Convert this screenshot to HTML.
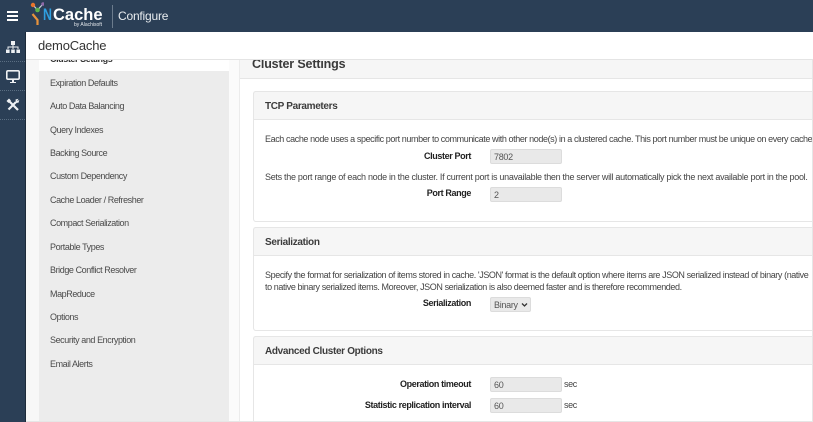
<!DOCTYPE html>
<html><head><meta charset="utf-8"><style>
html,body{margin:0;padding:0;width:813px;height:422px;overflow:hidden;background:#fff;font-family:"Liberation Sans",sans-serif;color:#333}
div,span{position:absolute;white-space:nowrap}
#w{left:0;top:0;width:813px;height:422px;overflow:hidden}
.m{left:50px;font-size:9px;color:#4a4a4a;line-height:12px;letter-spacing:-.42px}
.h{left:253px;width:560px;background:#f6f6f6;border:1px solid #e6e6e6;border-right:0;box-sizing:border-box;border-radius:3px 0 0 0}
.c{left:253px;width:560px;background:#fff;border:1px solid #e6e6e6;border-right:0;box-sizing:border-box;border-radius:3px 0 0 3px}
.t{left:265px;font-size:10px;font-weight:bold;color:#3c3c3c;line-height:14px;letter-spacing:-.33px}
.p{left:265px;font-size:9px;color:#444;line-height:12px;letter-spacing:-.4px}
.l{right:342px;font-size:9px;font-weight:bold;color:#222;line-height:12px;letter-spacing:-.38px}
.i{left:490px;width:72px;height:15px;background:#e9e9e9;border:1px solid #dcdcdc;box-sizing:border-box;border-radius:2px;font-size:9px;color:#555;line-height:14px;padding-left:3px;letter-spacing:-.3px}
.sb{left:0;width:25px;height:1px;border-bottom:1px dotted #5a6e82}
</style></head><body><div id="w">
<div style="left:0;top:0;width:813px;height:32px;background:#2b3f56"></div>
<div style="left:7px;top:11px;width:11px;height:2px;background:#fff"></div>
<div style="left:7px;top:15px;width:11px;height:2px;background:#fff"></div>
<div style="left:7px;top:19px;width:11px;height:2px;background:#fff"></div>
<svg style="position:absolute;left:30px;top:1px" width="14" height="28" viewBox="0 0 14 28">
<path d="M3 4 L7.500 9 L13 3" stroke="#c9d3dc" stroke-width="1.200" fill="none"/>
<circle cx="3" cy="4" r="2.200" fill="#e8742c"/><circle cx="7.500" cy="9" r="2.300" fill="#5cb34a"/><circle cx="13" cy="3" r="1.800" fill="#8f6aa8"/>
<path d="M2.500 13 L7.500 19 L7.500 24" stroke="#e8933c" stroke-width="2.200" fill="none"/>
</svg>
<span style="left:43px;top:3px;font-size:16.500px;font-weight:bold;color:#2f9fe0;line-height:24px;transform:scaleX(.75);transform-origin:left">N</span>
<span style="left:53px;top:3px;font-size:16.500px;font-weight:bold;color:#fff;line-height:24px">Cache</span>
<span style="left:74px;top:22px;font-size:5px;color:#e4e8ec;line-height:7px">by Alachisoft</span>
<div style="left:112px;top:5px;width:1px;height:23px;background:#6b7b8c"></div>
<span style="left:118px;top:8px;font-size:12px;color:#e8ecef;line-height:16px;letter-spacing:-.2px">Configure</span>

<div style="left:0;top:32px;width:25px;height:390px;background:#2b3f56"></div>
<div style="left:25px;top:32px;width:1px;height:390px;background:#1d2b3a"></div>
<div class="sb" style="top:60px"></div><div class="sb" style="top:89px"></div><div class="sb" style="top:118px"></div>
<svg style="position:absolute;left:6px;top:41px" width="14" height="13" viewBox="0 0 14 13">
<path d="M5 0h4v4H5zM0 8.500h3.600V12H0zM5.200 8.500h3.600V12H5.200zM10.400 8.500H14V12h-3.600z" fill="#eef1f4"/>
<path d="M7 4v4M2 8V6h10v2" stroke="#eef1f4" fill="none"/></svg>
<svg style="position:absolute;left:6px;top:70px" width="14" height="13" viewBox="0 0 14 13">
<rect x=".8" y=".8" width="12.400" height="8.400" rx="1.200" fill="#2b3f56" stroke="#eef1f4" stroke-width="1.600"/>
<path d="M4 12h6v1H4zM6 9.500h2v2.500H6z" fill="#eef1f4"/></svg>
<svg style="position:absolute;left:6px;top:98px" width="14" height="14" viewBox="0 0 14 14">
<path d="M3 3 L12 12" stroke="#eef1f4" stroke-width="2.200"/>
<path d="M10 4 L2.500 11.500" stroke="#eef1f4" stroke-width="2.200"/>
<path d="M.5 3 L3 .5 L5 2.500 L2.500 5z" fill="#eef1f4"/>
<path d="M9.500 1.500 L12.500 .8 L11 3 L13.300 2 L12.600 4.600 L10 5z" fill="#eef1f4"/></svg>

<div style="left:26px;top:32px;width:787px;height:390px;background:#fff"></div>
<div style="left:26px;top:32px;width:13px;height:390px;background:#f7f7f7"></div>
<div style="left:229px;top:60px;width:11px;height:362px;background:#fbfbfb"></div>
<div style="left:239px;top:60px;width:1px;height:362px;background:#ececec"></div>
<div style="left:39px;top:60px;width:190px;height:362px;background:#ececec"></div>
<div style="left:39px;top:50px;width:190px;height:21px;background:#fff"></div>
<span class="m" style="top:53px;font-weight:bold;color:#333">Cluster Settings</span>
<span class="m" style="top:77px">Expiration Defaults</span>
<span class="m" style="top:100px">Auto Data Balancing</span>
<span class="m" style="top:124px">Query Indexes</span>
<span class="m" style="top:147px">Backing Source</span>
<span class="m" style="top:170px">Custom Dependency</span>
<span class="m" style="top:194px">Cache Loader / Refresher</span>
<span class="m" style="top:217px">Compact Serialization</span>
<span class="m" style="top:241px">Portable Types</span>
<span class="m" style="top:264px">Bridge Conflict Resolver</span>
<span class="m" style="top:288px">MapReduce</span>
<span class="m" style="top:311px">Options</span>
<span class="m" style="top:334px">Security and Encryption</span>
<span class="m" style="top:358px">Email Alerts</span>

<div style="left:240px;top:60px;width:573px;height:18px;background:#f6f6f6;border-bottom:1px solid #e6e6e6"></div>
<span style="left:252px;top:56px;font-size:12.500px;font-weight:bold;color:#3a3a3a;line-height:16px;letter-spacing:-.15px">Cluster Settings</span>

<div style="left:26px;top:32px;width:787px;height:28px;background:#fff;border-bottom:1px solid #e4e4e4;box-sizing:border-box"></div>
<span style="left:38px;top:37px;font-size:13px;color:#333;line-height:18px;letter-spacing:-.2px">demoCache</span>

<div class="c" style="top:91px;height:131px"></div>
<div class="h" style="top:91px;height:29px"></div>
<span class="t" style="top:100px">TCP Parameters</span>
<span class="p" style="top:133px">Each cache node uses a specific port number to communicate with other node(s) in a clustered cache. This port number must be unique on every cache</span>
<span class="l" style="top:150px">Cluster Port</span>
<div class="i" style="top:149px">7802</div>
<span class="p" style="top:171px;letter-spacing:-.29px">Sets the port range of each node in the cluster. If current port is unavailable then the server will automatically pick the next available port in the pool.</span>
<span class="l" style="top:187px">Port Range</span>
<div class="i" style="top:187px">2</div>

<div class="c" style="top:227px;height:104px"></div>
<div class="h" style="top:227px;height:29px"></div>
<span class="t" style="top:236px">Serialization</span>
<span class="p" style="top:269px">Specify the format for serialization of items stored in cache. 'JSON' format is the default option where items are JSON serialized instead of binary (native</span>
<span class="p" style="top:281px">to native binary serialized items. Moreover, JSON serialization is also deemed faster and is therefore recommended.</span>
<span class="l" style="top:297px">Serialization</span>
<div class="i" style="top:297px;width:41px">Binary</div>
<svg style="position:absolute;left:521px;top:302px" width="7" height="6" viewBox="0 0 7 6"><path d="M1 1.500 L3.500 4 L6 1.500" stroke="#333" stroke-width="1.300" fill="none"/></svg>

<div class="c" style="top:336px;height:90px"></div>
<div class="h" style="top:336px;height:29px"></div>
<span class="t" style="top:345px">Advanced Cluster Options</span>
<span class="l" style="top:378px">Operation timeout</span>
<div class="i" style="top:377px">60</div>
<span class="p" style="left:564px;top:378px">sec</span>
<span class="l" style="top:399px">Statistic replication interval</span>
<div class="i" style="top:398px">60</div>
<span class="p" style="left:564px;top:399px">sec</span>
<div style="left:26px;top:421px;width:787px;height:1px;background:#e6e6e6"></div>
<div style="left:812px;top:60px;width:1px;height:362px;background:#e6e6e6"></div>
</div></body></html>
